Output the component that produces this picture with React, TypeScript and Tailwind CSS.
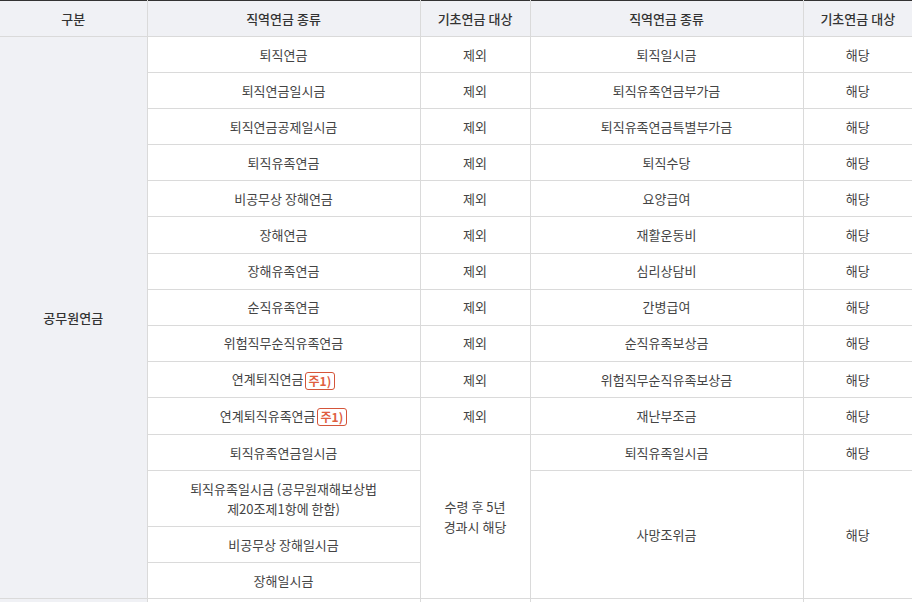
import React from "react";

const font = { fontFamily: '"Noto Sans CJK KR", "Noto Sans", sans-serif' };

function Badge() {
  return (
    <span className="ml-px inline-block rounded-[3px] border border-[#d4553a] px-[3px] text-[12px] font-bold leading-[16px] text-[#e0603f] align-middle">
      주1)
    </span>
  );
}

const rows: [React.ReactNode, string, string][] = [
  ["퇴직연금", "제외", "퇴직일시금"],
  ["퇴직연금일시금", "제외", "퇴직유족연금부가금"],
  ["퇴직연금공제일시금", "제외", "퇴직유족연금특별부가금"],
  ["퇴직유족연금", "제외", "퇴직수당"],
  ["비공무상 장해연금", "제외", "요양급여"],
  ["장해연금", "제외", "재활운동비"],
  ["장해유족연금", "제외", "심리상담비"],
  ["순직유족연금", "제외", "간병급여"],
  ["위험직무순직유족연금", "제외", "순직유족보상금"],
  [<>연계퇴직연금<Badge /></>, "제외", "위험직무순직유족보상금"],
  [<>연계퇴직유족연금<Badge /></>, "제외", "재난부조금"],
];

const td = "border border-[#dadada] px-2 py-[7.55px] text-center align-middle";
const th = "border border-[#dadada] border-t-0 px-2 py-[7.5px] text-center align-middle font-medium text-[#333] bg-[#f0f1f5]";

export default function App() {
  return (
    <div className="w-[912px] h-[602px] overflow-hidden bg-white" style={font}>
      <table className="w-[912px] table-fixed border-collapse text-[13px] leading-[20px] text-[#444] border-t border-t-[#333]">
        <colgroup>
          <col className="w-[147px]" />
          <col className="w-[273px]" />
          <col className="w-[110px]" />
          <col className="w-[273px]" />
          <col className="w-[109px]" />
        </colgroup>
        <thead>
          <tr>
            <th className={th + " border-l-0"}>구분</th>
            <th className={th}>직역연금 종류</th>
            <th className={th}>기초연금 대상</th>
            <th className={th}>직역연금 종류</th>
            <th className={th + " border-r-0"}>기초연금 대상</th>
          </tr>
        </thead>
        <tbody>
          {rows.map((r, i) => (
            <tr key={i}>
              {i === 0 && (
                <td rowSpan={15} className={td + " border-l-0 bg-[#f0f1f5] font-medium text-[#333]"}>
                  공무원연금
                </td>
              )}
              <td className={td}>{r[0]}</td>
              <td className={td}>{r[1]}</td>
              <td className={td}>{r[2]}</td>
              <td className={td + " border-r-0"}>해당</td>
            </tr>
          ))}
          <tr>
            <td className={td}>퇴직유족연금일시금</td>
            <td rowSpan={4} className={td}>
              수령 후 5년
              <br />
              경과시 해당
            </td>
            <td className={td}>퇴직유족일시금</td>
            <td className={td + " border-r-0"}>해당</td>
          </tr>
          <tr>
            <td className={td}>
              퇴직유족일시금 (공무원재해보상법
              <br />
              제20조제1항에 한함)
            </td>
            <td rowSpan={3} className={td}>사망조위금</td>
            <td rowSpan={3} className={td + " border-r-0"}>해당</td>
          </tr>
          <tr>
            <td className={td}>비공무상 장해일시금</td>
          </tr>
          <tr>
            <td className={td}>장해일시금</td>
          </tr>
          <tr>
            <td rowSpan={3} className={td + " border-l-0 bg-[#f0f1f5] font-medium text-[#333]"}>
              &nbsp;
            </td>
            <td className={td}>&nbsp;</td>
            <td className={td}>&nbsp;</td>
            <td className={td}>&nbsp;</td>
            <td className={td + " border-r-0"}>&nbsp;</td>
          </tr>
        </tbody>
      </table>
    </div>
  );
}
